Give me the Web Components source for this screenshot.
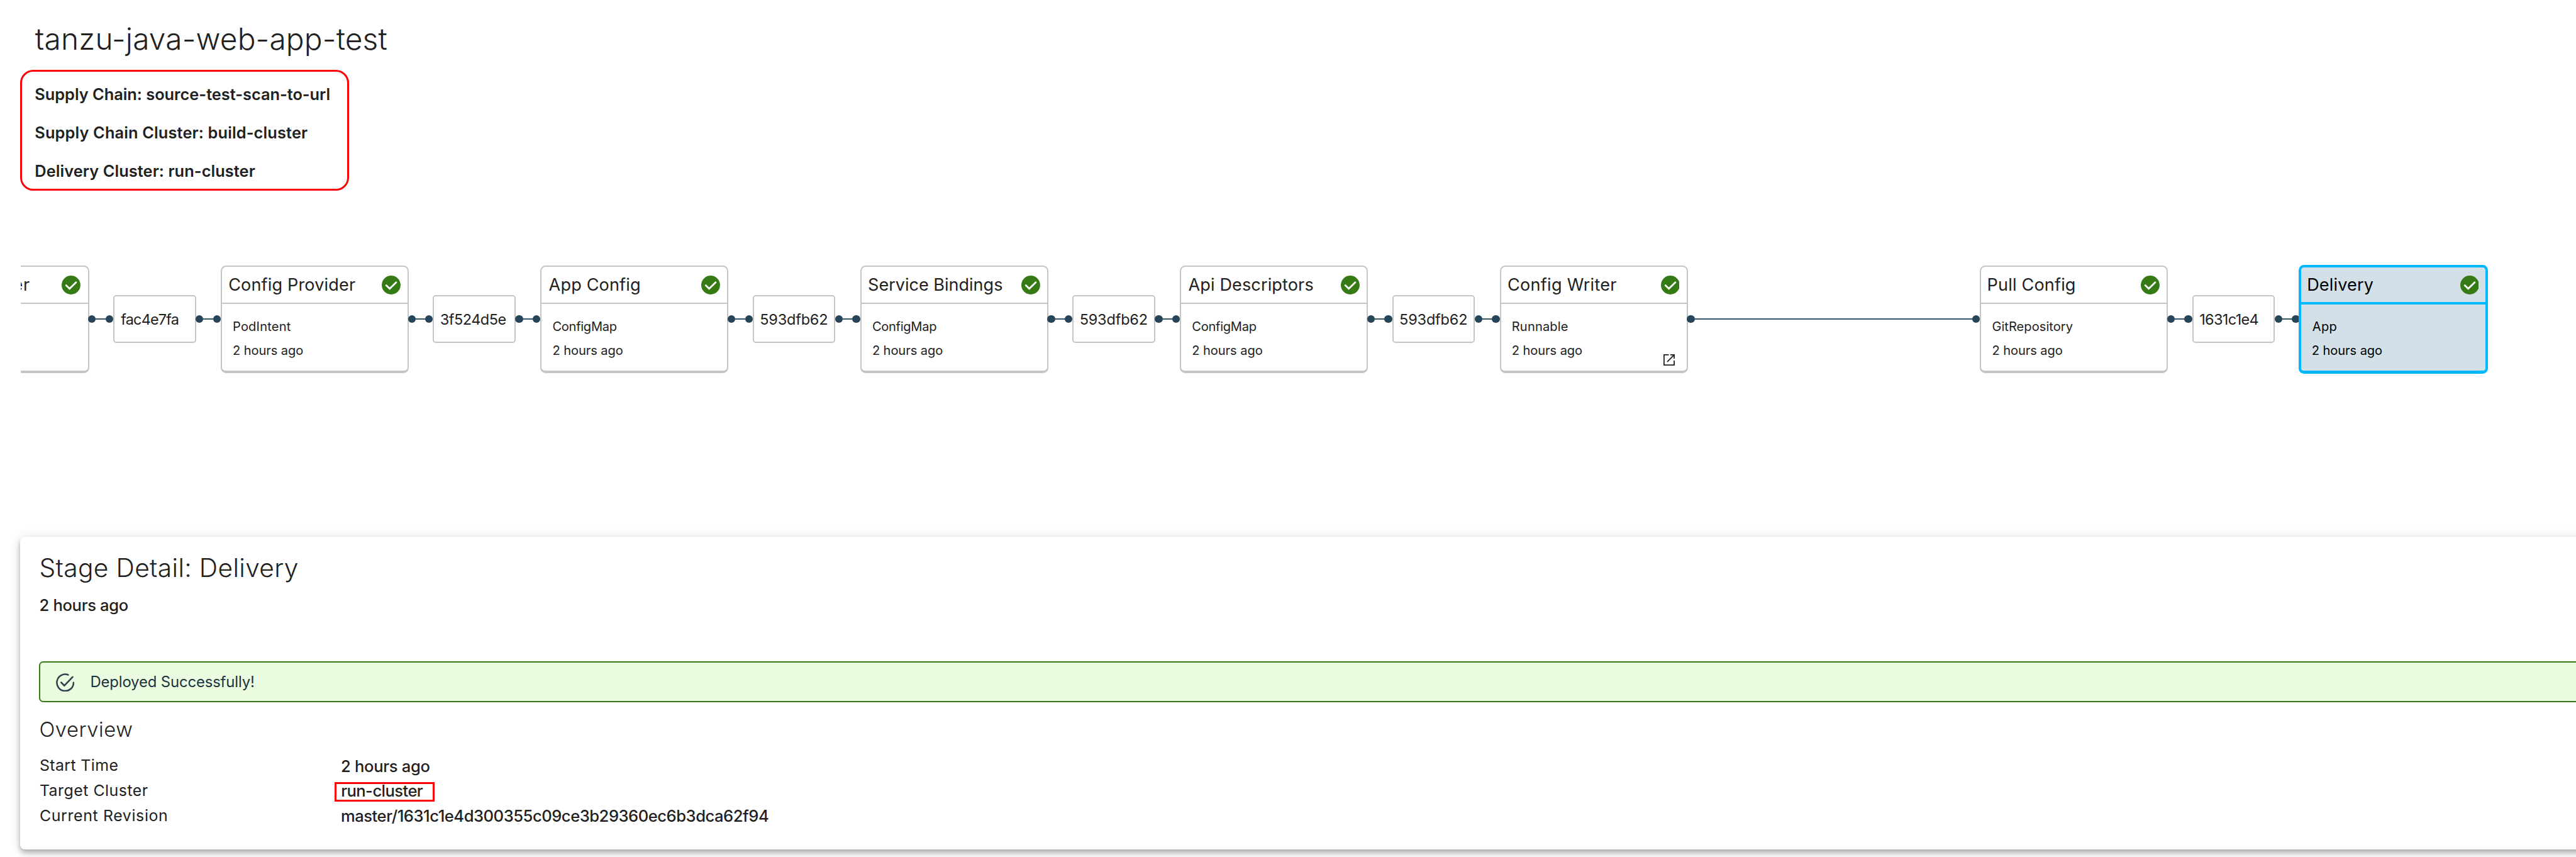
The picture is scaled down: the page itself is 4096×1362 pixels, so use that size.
<!DOCTYPE html>
<html lang="en">
<head>
<meta charset="utf-8">
<title>tanzu-java-web-app-test</title>
<style>
  /* 0.01rem is one design pixel: 4326 design pixels span the window width */
  html { font-size: calc(100vw / 43.26); }
  body { margin: 0; background: #fff; color: #212121; font-family: Inter, "Open Sans", sans-serif; height: 100vh; overflow: hidden; }
</style>
</head>
<body>
<workload-page></workload-page>
<script>
const define = (name, html, setup) => {
  const tpl = document.createElement('template');
  tpl.innerHTML = html;
  customElements.define(name, class extends HTMLElement {
    connectedCallback() {
      if (this.shadowRoot) return;
      this.attachShadow({ mode: 'open' }).append(tpl.content.cloneNode(true));
      if (setup) setup(this, this.shadowRoot);
    }
  });
};

/* One line of text whose ink spans a given width: size, weight and w are attributes in design pixels. */
define('t-label', `
  <style>:host{display:block;white-space:nowrap} span{display:block;margin-top:.01rem;margin-bottom:-.01rem}</style>
  <span><slot></slot></span>`, (el, root) => {
  const k = innerWidth / 4326;
  const size = +el.getAttribute('size') * k, weight = el.getAttribute('weight') || 380;
  const text = el.textContent, w = +el.getAttribute('w') * k;
  const ctx = document.createElement('canvas').getContext('2d');
  ctx.font = `${weight} ${size}px Inter, "Open Sans", sans-serif`;
  const m = ctx.measureText(text);
  const ink = m.actualBoundingBoxRight + m.actualBoundingBoxLeft;
  const span = root.querySelector('span');
  span.style.fontSize = size + 'px';
  span.style.fontWeight = weight;
  span.style.letterSpacing = ((w - ink) / (text.length - 1)).toFixed(3) + 'px';
  span.style.marginLeft = m.actualBoundingBoxLeft.toFixed(2) + 'px';
});

define('ok-badge', `
  <style>:host{display:block;width:.316rem;height:.316rem;flex:none} svg{display:block;width:100%;height:100%}</style>
  <svg viewBox="0 0 32 32"><circle cx="16" cy="16" r="16" fill="#357a14"/>
  <path d="M7.7 16.5l5.8 5.7L24.5 11.4" fill="none" stroke="#fff" stroke-width="3" stroke-linecap="round"/></svg>`);

define('popout-icon', `
  <style>:host{display:block;width:.19rem;height:.19rem;flex:none} svg{display:block;width:100%;height:100%}</style>
  <svg viewBox="0 0 19 19" fill="none" stroke="#212121" stroke-width="1.9">
  <path d="M9 1H1V18H18V10.5M6.3 12.7L17.2 1.8M11.5 1H18V7.5"/></svg>`);

define('success-icon', `
  <style>:host{display:block;width:.31rem;height:.31rem;flex:none} svg{display:block;width:100%;height:100%}</style>
  <svg viewBox="0 0 31 31" fill="none" stroke="#2f424c" stroke-width="2.7" stroke-linecap="round">
  <path d="M20.4 2.6A14 14 0 1 0 29.5 15.7"/><path d="M8.7 15.3l5.4 5.5L28 6.2" stroke-linejoin="miter"/></svg>`);

define('chain-link', `
  <style>
    :host{display:flex;align-items:center;flex:none;width:.42rem;height:.13rem;margin-top:-.02rem}
    i{flex:none;width:.13rem;height:.13rem;border-radius:50%;background:#264558}
    b{flex:1;height:.022rem;background:#355569;margin:0 -.01rem}
    :host([long]){width:4.92rem}
  </style><i></i><b></b><i></i>`);

define('hash-box', `
  <style>
    :host{display:block;box-sizing:border-box;flex:none;width:1.39rem;height:.805rem;margin:-.015rem -.005rem 0 0;
      border:2px solid #c5c5c5;border-radius:.05rem;padding-left:.11rem;line-height:.755rem;background:#fff}
  </style><slot></slot>`);

define('stage-card', `
  <style>
    :host{display:flex;flex-direction:column;box-sizing:border-box;flex:none;width:3.16rem;height:1.81rem;
      border:2px solid #c5c5c5;border-bottom-width:4px;border-radius:.09rem;background:#fff;margin-right:-.015rem}
    header{display:flex;justify-content:space-between;align-items:center;box-sizing:border-box;height:.625rem;
      border-bottom:2px solid #c5c5c5;padding:.01rem .12rem;line-height:.58rem}
    header ok-badge{margin-top:.015rem}
    section{display:flex;justify-content:space-between;padding:.175rem .2rem 0 .192rem;line-height:.4rem}
    popout-icon{margin-top:.668rem}
    popout-icon[hidden]{display:none}
    :host([selected]){width:3.18rem;height:1.83rem;margin:0 -.015rem;border:.043rem solid #00b8ff;border-bottom-width:.06rem;
      background:#d3e0e7;color:#000}
    :host([selected]) header{border-bottom:.043rem solid #00b8ff;height:.62rem;padding:.005rem .115rem .01rem}
    :host([selected]) section{padding:.17rem .185rem 0}
    :host([cut]){margin-left:-2.01rem}
    :host([cut]) header{padding-left:1.87rem}
  </style>
  <header><slot name="title"></slot><ok-badge></ok-badge></header>
  <section><div><slot></slot></div><popout-icon hidden></popout-icon></section>`, (el, root) => {
  if (el.hasAttribute('link')) root.querySelector('popout-icon').hidden = false;
});

define('supply-chain', `
  <style>:host{display:flex;align-items:center;height:1.83rem;margin:1.247rem 0 0 .345rem;overflow:hidden}</style>
  <slot></slot>`);

define('summary-box', `
  <style>:host{display:block;box-sizing:border-box;width:5.52rem;height:2.03rem;margin-left:.34rem;
    border:3px solid #fb0007;border-radius:.22rem;padding:.06rem 0 0 .223rem;line-height:.64rem}</style>
  <slot></slot>`);

define('alert-bar', `
  <style>:host{display:flex;align-items:center;box-sizing:border-box;height:.69rem;margin-top:.746rem;
    border:2px solid #357a14;border-right:0;border-radius:.07rem 0 0 .07rem;background:#eafbdf;color:#1c3440;
    padding-left:.26rem;gap:.285rem;line-height:.6rem} success-icon{margin-top:.02rem}</style>
  <success-icon></success-icon><slot></slot>`);

define('detail-row', `
  <style>
    :host{display:grid;grid-template-columns:5.06rem auto;justify-content:start;height:.42rem;line-height:.42rem;padding-left:.015rem}
    .v{padding-top:.008rem}
    :host([marked]) .v{box-sizing:border-box;width:1.68rem;height:.325rem;margin:.073rem 0 0 -.12rem;padding:0 0 0 .09rem;
      border:3px solid #fb0007;line-height:.22rem}
  </style>
  <slot name="key"></slot><div class="v"><slot></slot></div>`);

define('stage-detail', `
  <style>
    :host{display:block;box-sizing:border-box;height:5.25rem;margin:2.728rem -.3rem 0 .34rem;padding:.23rem 0 0 .32rem;
      border-radius:.08rem;background:#fff;
      box-shadow:0 .04rem .08rem -.02rem rgba(0,0,0,.2),0 .08rem .1rem 0 rgba(0,0,0,.14),0 .02rem .2rem 0 rgba(0,0,0,.12)}
    .h{line-height:.6rem;margin-left:.02rem}
    .t{line-height:.4rem;margin:.126rem 0 0 .012rem}
    .o{line-height:.5rem;margin:.21rem 0 .147rem .02rem}
  </style>
  <t-label class="h" size="43" weight="300" w="432.5">Stage Detail: Delivery</t-label>
  <t-label class="t" size="27" weight="460" w="148">2 hours ago</t-label>
  <alert-bar><t-label size="25.2" w="272">Deployed Successfully!</t-label></alert-bar>
  <t-label class="o" size="34.6" weight="300" w="154">Overview</t-label>
  <detail-row><t-label slot="key" size="26.3" w="130.5">Start Time</t-label><t-label size="27" weight="460" w="148.5">2 hours ago</t-label></detail-row>
  <detail-row marked><t-label slot="key" size="26.3" w="180.5">Target Cluster</t-label><t-label size="27" weight="460" w="137">run-cluster</t-label></detail-row>
  <detail-row><t-label slot="key" size="26.3" w="212.5">Current Revision</t-label><t-label size="27" weight="460" w="717">master/1631c1e4d300355c09ce3b29360ec6b3dca62f94</t-label></detail-row>`);

/* name, name width, kind, kind width, attributes, then the artifact that follows and its width */
const stages = [
  ['er', 27, '', 0, 'cut', 'fac4e7fa', 96.5],
  ['Config Provider', 212, 'PodIntent', 97, '', '3f524d5e', 109.5],
  ['App Config', 152.5, 'ConfigMap', 107, '', '593dfb62', 112],
  ['Service Bindings', 224, 'ConfigMap', 107, '', '593dfb62', 112],
  ['Api Descriptors', 209, 'ConfigMap', 107, '', '593dfb62', 112],
  ['Config Writer', 182, 'Runnable', 93, 'link', 'long', 0],
  ['Pull Config', 145, 'GitRepository', 134.5, '', '1631c1e4', 97.6],
  ['Delivery', 109.5, 'App', 41, 'selected', '', 0],
];
const chain = stages.map(([n, nw, kind, kw, attr, next, w]) => `
  <stage-card ${attr}><t-label slot="title" size="28.6" w="${nw}">${n}</t-label>${kind ? `
    <t-label size="21.2" w="${kw}">${kind}</t-label><t-label size="21.2" w="116.5">2 hours ago</t-label>` : ''}
  </stage-card>${next === 'long' ? '<chain-link long></chain-link>' : next ? `
  <chain-link></chain-link><hash-box><t-label size="24.8" w="${w}">${next}</t-label></hash-box><chain-link></chain-link>` : ''}`).join('');

define('workload-page', `
  <style>
    :host{display:block;overflow:hidden;height:100vh}
    .title{padding-top:.25rem;line-height:.79rem;margin:0 0 .13rem .59rem}
  </style>
  <t-label class="title" size="50.5" weight="300" w="591">tanzu-java-web-app-test</t-label>
  <summary-box>
    <t-label size="26.8" weight="560" w="493.5">Supply Chain: source-test-scan-to-url</t-label>
    <t-label size="26.8" weight="560" w="457">Supply Chain Cluster: build-cluster</t-label>
    <t-label size="26.8" weight="560" w="369">Delivery Cluster: run-cluster</t-label>
  </summary-box>
  <supply-chain>${chain}</supply-chain>
  <stage-detail></stage-detail>`);
</script>
</body>
</html>
